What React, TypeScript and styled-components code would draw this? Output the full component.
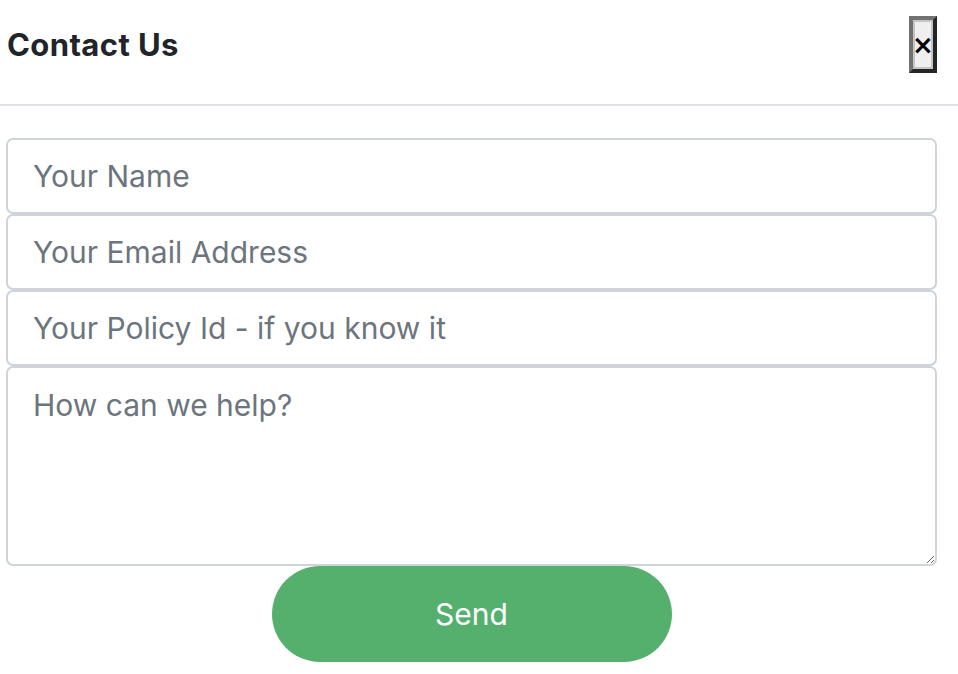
import React from 'react';
import styled, { createGlobalStyle } from 'styled-components';

const GlobalStyle = createGlobalStyle`
  html, body {
    margin: 0;
    padding: 0;
    background: #ffffff;
    font-family: Inter, "Noto Sans", sans-serif;
  }
`;

const Modal = styled.div`
  width: 958px;
  display: flex;
  flex-direction: column;
`;

const Header = styled.header`
  display: flex;
  align-items: flex-start;
  justify-content: space-between;
  height: 106px;
  padding: 0 21px 0 7px;
  box-sizing: border-box;
  border-bottom: 2px solid #dee2e6;
`;

const Title = styled.h2`
  margin: 27px 0 0;
  font-size: 31px;
  font-weight: 700;
  letter-spacing: 0.4px;
  line-height: 36px;
  color: #212529;
`;

const CloseButton = styled.button`
  margin-top: 16px;
  width: 28px;
  height: 57px;
  padding: 0;
  box-sizing: border-box;
  border: 4px solid;
  border-color: #727272 #252525 #252525 #727272;
  box-shadow: inset 0 0 0 2px #c4c4c4;
  background: #efefef;
  color: #000;
  font-family: "DejaVu Sans", sans-serif;
  font-size: 26px;
  font-weight: 700;
  line-height: 1;
  display: flex;
  align-items: center;
  justify-content: center;
`;

const Form = styled.form`
  display: flex;
  flex-direction: column;
  align-items: center;
  padding: 32px 21px 0 6px;
`;

const Field = styled.input`
  width: 100%;
  height: 76px;
  box-sizing: border-box;
  border: 2px solid #ced4da;
  border-radius: 7px;
  padding: 0 25px;
  font-family: Inter, "Noto Sans", sans-serif;
  font-size: 30px;
  color: #212529;
  outline: none;

  &::placeholder {
    color: #6c757d;
  }
`;

const Message = styled.textarea`
  width: 100%;
  height: 200px;
  box-sizing: border-box;
  border: 2px solid #ced4da;
  border-radius: 7px;
  padding: 17px 25px;
  font-family: Inter, "Noto Sans", sans-serif;
  font-size: 30px;
  line-height: 40px;
  color: #212529;
  outline: none;
  resize: vertical;
  display: block;

  &::placeholder {
    color: #6c757d;
  }
`;

const SendButton = styled.button`
  width: 400px;
  height: 96px;
  border: none;
  border-radius: 48px;
  background: #55b06e;
  color: #ffffff;
  font-family: Inter, "Noto Sans", sans-serif;
  font-size: 30px;
  cursor: pointer;
`;

const App: React.FC = () => {
  return (
    <>
      <GlobalStyle />
      <Modal>
        <Header>
          <Title>Contact Us</Title>
          <CloseButton type="button" aria-label="Close">×</CloseButton>
        </Header>
        <Form onSubmit={(e) => e.preventDefault()}>
          <Field type="text" placeholder="Your Name" />
          <Field type="email" placeholder="Your Email Address" />
          <Field type="text" placeholder="Your Policy Id - if you know it" />
          <Message placeholder="How can we help?" />
          <SendButton type="submit">Send</SendButton>
        </Form>
      </Modal>
    </>
  );
};

export default App;
